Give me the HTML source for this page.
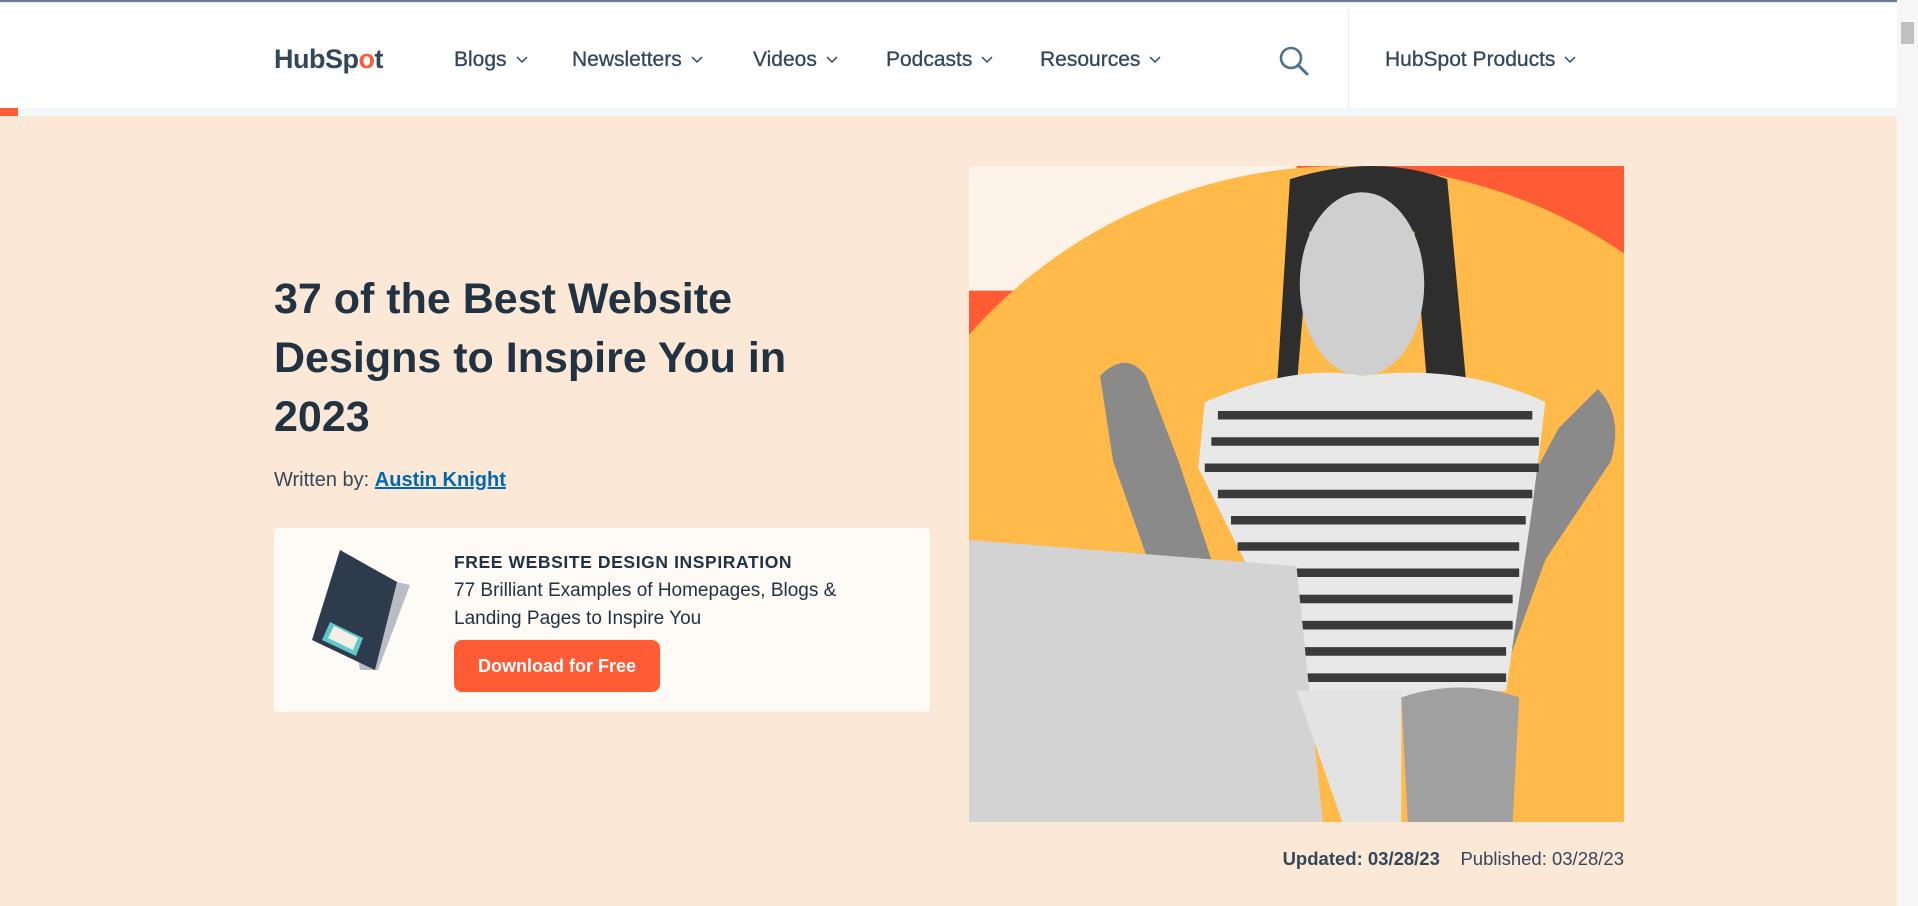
<!DOCTYPE html>
<html><head><meta charset="utf-8"><style>
*{margin:0;padding:0;box-sizing:border-box}
html,body{width:1918px;height:906px;overflow:hidden;background:#fce8d6;font-family:"Liberation Sans",sans-serif;color:#213343}
.topline{position:absolute;left:0;top:0;width:1918px;height:2px;background:#6a7a90}
.nav{position:absolute;left:0;top:2px;width:1897px;height:106px;background:#fff;border-top:1px solid #e8ebf2}
.strip{position:absolute;left:0;top:108px;width:1897px;height:8px;background:#f4f7fa}
.orng{position:absolute;left:0;top:108px;width:18px;height:8px;background:#ff5c35}
.logo{position:absolute;left:274px;top:41px;font-size:27px;font-weight:bold;color:#33475b;letter-spacing:-0.5px}
.ni{position:absolute;top:45px;font-size:21px;color:#33475b;-webkit-text-stroke:0.3px #33475b}
.ni svg{margin-left:9px;vertical-align:middle}
.div{position:absolute;left:1348px;top:10px;width:1px;height:98px;background:#e5eaf0}
.sb{position:absolute;right:0;top:0;width:21px;height:906px;background:#f6f6f6}
.sb .th{position:absolute;left:4px;top:22px;width:13px;height:22px;background:#c1c1c1}
h1{position:absolute;left:274px;top:270px;white-space:nowrap;font-size:43px;line-height:59px;font-weight:bold;color:#213343}
.by{position:absolute;left:274px;top:469px;font-size:20px;color:#33475b}
.by a{color:#0068b1;text-decoration:underline;font-weight:bold}
.card{position:absolute;left:274px;top:528px;width:656px;height:184px;background:#fefaf6;border-radius:4px}
.k1{position:absolute;left:454px;top:552px;font-size:17.5px;font-weight:bold;letter-spacing:.6px;color:#213343}
.k2{position:absolute;left:454px;top:577px;font-size:19px;line-height:28px;color:#213343}
.btn{position:absolute;left:454px;top:640px;width:206px;height:52px;background:#ff5c35;border-radius:8px;color:#fff;font-weight:bold;font-size:18px;text-align:center;line-height:52px}
.img{position:absolute;left:969px;top:166px;width:655px;height:656px}
.dates{position:absolute;right:294px;top:848px;font-size:18.5px;color:#33475b}
</style></head><body>
<div class="topline"></div>
<div class="nav">
 <div class="logo">HubSp<span style="color:#ff5c35">o</span>t</div>
 <div class="ni" style="left:454px">Blogs<svg width="12" height="8"><path d="M1 1l5 5 5-5" fill="none" stroke="#33475b" stroke-width="1.5"/></svg></div>
 <div class="ni" style="left:572px">Newsletters<svg width="12" height="8"><path d="M1 1l5 5 5-5" fill="none" stroke="#33475b" stroke-width="1.5"/></svg></div>
 <div class="ni" style="left:753px">Videos<svg width="12" height="8"><path d="M1 1l5 5 5-5" fill="none" stroke="#33475b" stroke-width="1.5"/></svg></div>
 <div class="ni" style="left:886px">Podcasts<svg width="12" height="8"><path d="M1 1l5 5 5-5" fill="none" stroke="#33475b" stroke-width="1.5"/></svg></div>
 <div class="ni" style="left:1040px">Resources<svg width="12" height="8"><path d="M1 1l5 5 5-5" fill="none" stroke="#33475b" stroke-width="1.5"/></svg></div>
 <svg style="position:absolute;left:1278px;top:42px" width="32" height="32"><circle cx="13" cy="13" r="10" fill="none" stroke="#516f90" stroke-width="2.6"/><path d="M20 20l9 9" stroke="#516f90" stroke-width="3" stroke-linecap="round"/></svg>
 <div class="ni" style="left:1385px">HubSpot Products<svg width="12" height="8"><path d="M1 1l5 5 5-5" fill="none" stroke="#33475b" stroke-width="1.5"/></svg></div>
</div>
<div class="div"></div>
<div class="strip"></div><div class="orng"></div>
<h1>37 of the Best Website<br>Designs to Inspire You in<br>2023</h1>
<div class="by">Written by: <a>Austin Knight</a></div>
<div class="card"></div>
<svg style="position:absolute;left:300px;top:540px" width="110" height="150">
 <polygon points="40,10 97,42 110,45 78,130 60,130" fill="#b8bcc4"/>
 <polygon points="40,10 97,42 75,130 12,100" fill="#2d3b4c"/>
 <polygon points="30,82 63,98 56,116 22,100" fill="#5fc8c8"/>
 <polygon points="34,86 58,98 53,110 28,98" fill="#f3efe4"/>
</svg>
<div class="k1">FREE WEBSITE DESIGN INSPIRATION</div>
<div class="k2">77 Brilliant Examples of Homepages, Blogs &amp;<br>Landing Pages to Inspire You</div>
<div class="btn">Download for Free</div>
<svg class="img" viewBox="0 0 100 100" preserveAspectRatio="none">
 <rect width="100" height="100" fill="#ff5c35"/>
 <rect width="50" height="19" fill="#fef3e8"/>
 <circle cx="57" cy="76" r="76" fill="#ffba4a"/>
 <path d="M20 32 Q24 28 27 32 L32 45 L37 60 L36 65 L28 62 L22 45 Z" fill="#8a8a8a"/>
 <path d="M96 34 Q100 38 98 45 L88 60 L80 82 L75 80 L82 55 L90 40 Z" fill="#8a8a8a"/>
 <path d="M49 2 Q62 -2 73 2 L76 34 L70 34 L68 10 L52 10 L50 34 L47 34 Z" fill="#2e2e2e"/>
 <ellipse cx="60" cy="18" rx="9.5" ry="14" fill="#cfcfcf"/>
 <path d="M36 36 Q50 30 60 32 Q75 30 88 36 L86 52 L82 80 L52 82 L42 60 L35 46 Z" fill="#e8e8e8"/>
 <g stroke="#3a3a3a" stroke-width="1.3">
  <path d="M38 38H86M37 42H87M36 46H87M38 50H86M40 54H85M41 58H84M42 62H84M43 66H83M44 70H83M45 74H82M46 78H82"/>
 </g>
 <polygon points="0,57 50,61 54,100 0,100" fill="#d3d3d3"/>
 <polygon points="50,80 66,80 66,100 57,100" fill="#e3e3e3"/>
 <path d="M66 81 Q75 78 84 81 L83 100 L67 100 Z" fill="#a0a0a0"/>
</svg>
<div class="dates"><b>Updated: 03/28/23</b>&nbsp;&nbsp;&nbsp; Published: 03/28/23</div>
<div class="sb"><div class="th"></div></div>
</body></html>
